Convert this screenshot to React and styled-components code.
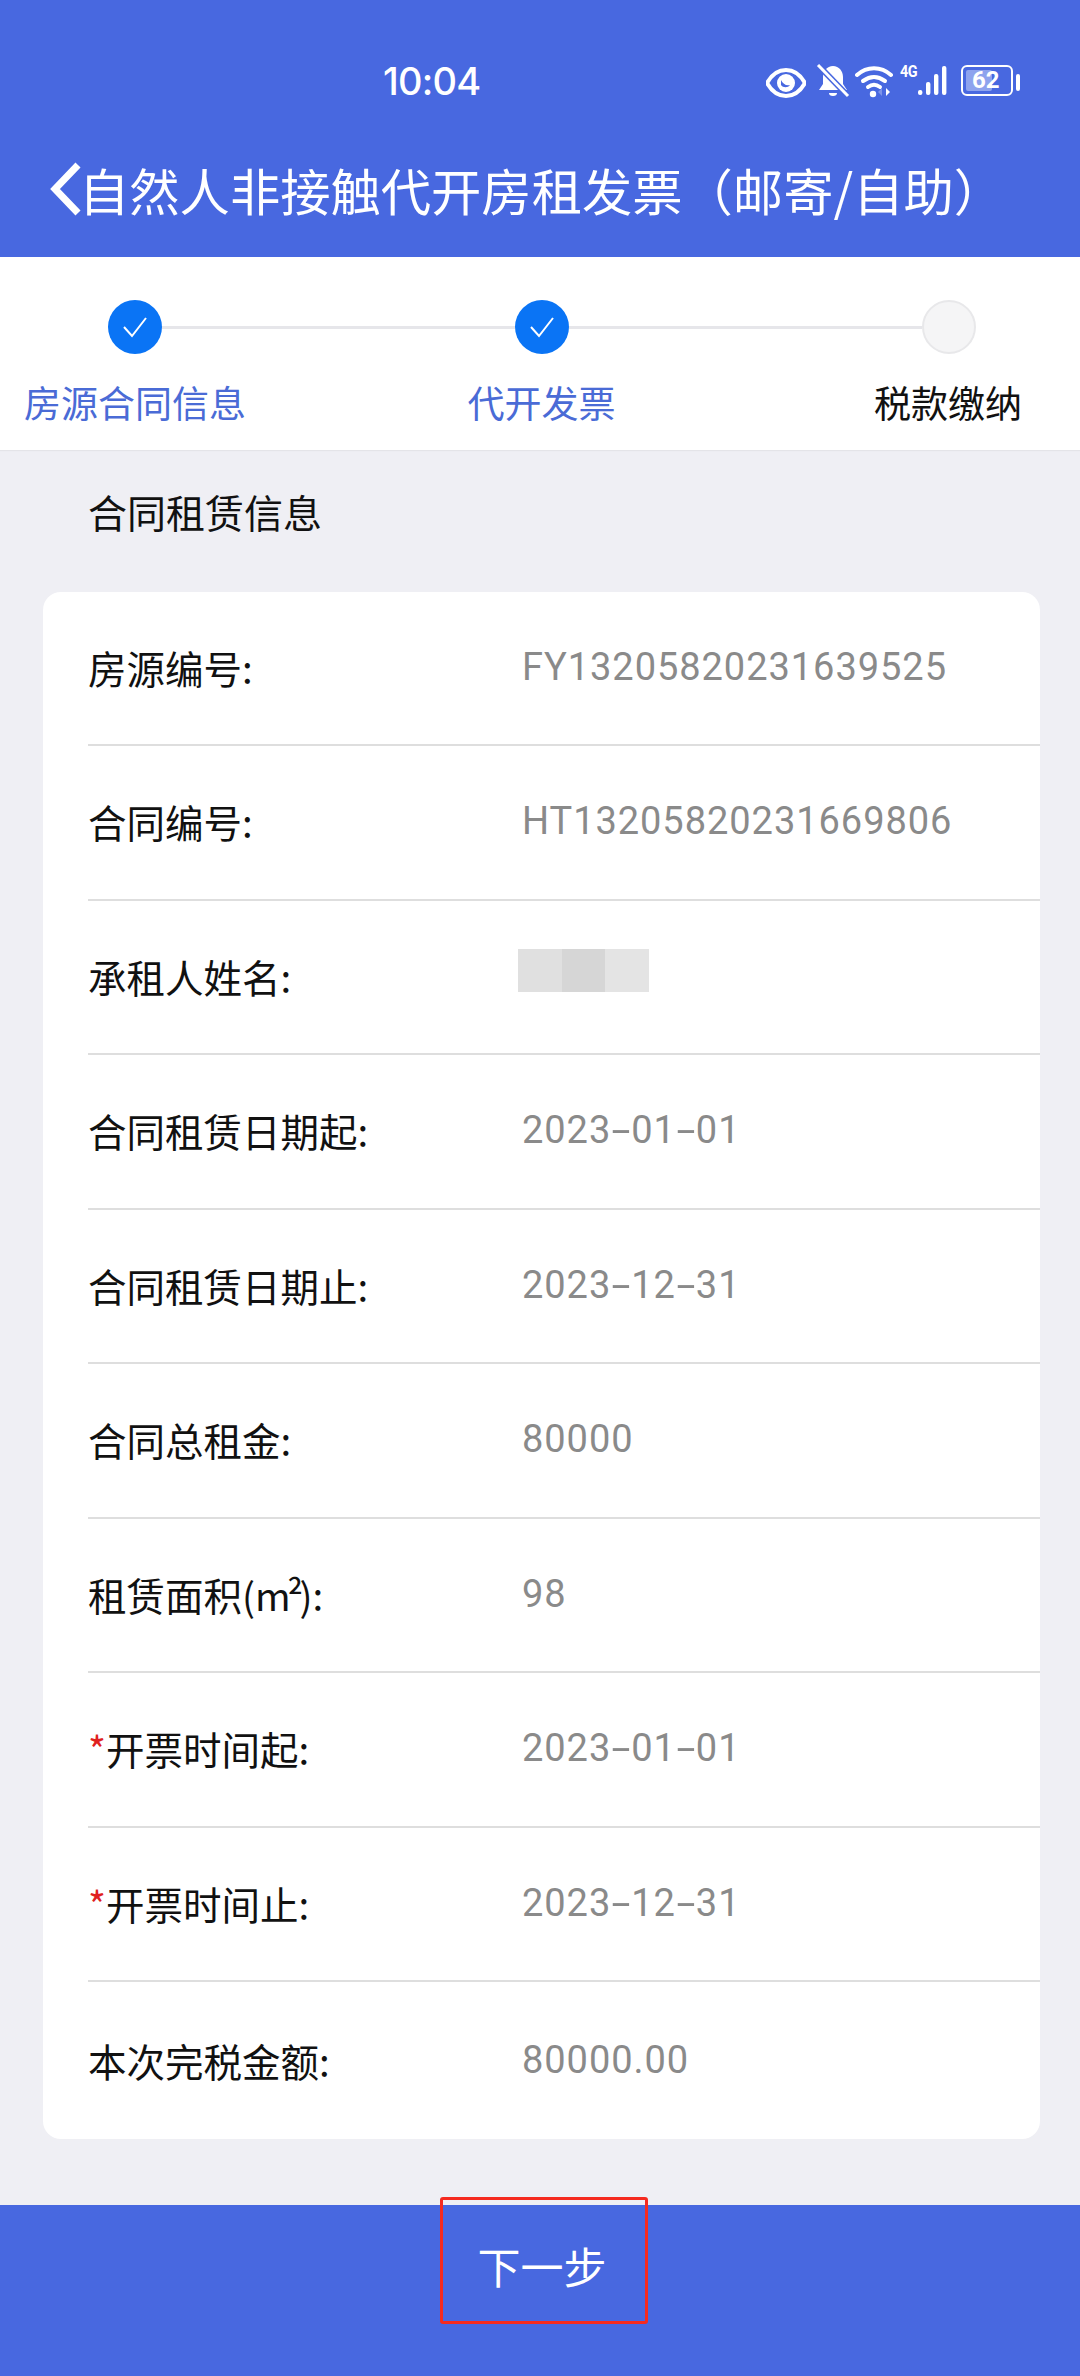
import React from "react";
import styled, { createGlobalStyle } from "styled-components";

const Global = createGlobalStyle`
  html, body { margin: 0; padding: 0; background: #efeff4; }
  * { box-sizing: border-box; }
  #root { width: 1080px; height: 2376px; }
`;

const FONT = `"Noto Sans CJK SC", "Noto Sans", sans-serif`;

const Page = styled.div`
  width: 1080px;
  height: 2376px;
  display: flex;
  flex-direction: column;
  overflow: hidden;
  font-family: ${FONT};
  background: #efeff4;
`;

const Header = styled.header`
  height: 257px;
  background: #4868e0;
  color: #fff;
  display: flex;
  flex-direction: column;
`;

const StatusBar = styled.div`
  height: 160px;
  padding-top: 62px;
  position: relative;
  display: flex;
  justify-content: flex-start;
`;

const Time = styled.div`
  margin-left: 383px;
  width: 100px;
  height: 36px;
  font-family: "Inter", "Noto Sans", sans-serif;
  font-size: 38px;
  line-height: 38px;
  font-weight: 500;
  letter-spacing: -0.8px;
`;

const StatusIcons = styled.div`
  margin-left: 283px;
  display: flex;
  align-items: flex-start;
`;

const NavBar = styled.div`
  display: flex;
  align-items: center;
  padding-left: 49px;
  height: 50px;
  margin-top: 4px;
`;

const Title = styled.h1`
  margin: 0 0 0 -2px;
  font-size: 50.3px;
  line-height: 50px;
  font-weight: 400;
  white-space: nowrap;
`;

const Stepper = styled.section`
  height: 193px;
  background: #fff;
  padding-top: 43px;
  box-shadow: 0 1px 1px #e4e4e8;
  position: relative;
`;

const Track = styled.div`
  display: flex;
  align-items: center;
  padding: 0 104px 0 108px;
`;

const Dot = styled.span`
  flex: none;
  width: 54px;
  height: 54px;
  border-radius: 50%;
  display: flex;
  align-items: center;
  justify-content: center;
  background: ${(p) => (p.$done ? "#0a74f5" : "#f5f5f6")};
  border: ${(p) => (p.$done ? "none" : "2px solid #e8e8ea")};
`;

const Line = styled.span`
  flex: 1;
  height: 3px;
  background: #e6e6ea;
`;

const StepLabels = styled.div`
  display: flex;
  justify-content: space-between;
  margin: 23px -3px 0 0;
`;

const StepLabel = styled.span`
  width: 270px;
  text-align: center;
  font-size: 37px;
  line-height: 50px;
  color: ${(p) => (p.$done ? "#4a6bd6" : "#111")};
`;

const SectionTitle = styled.h2`
  margin: 0;
  padding: 36px 0 0 88px;
  height: 142px;
  font-size: 39px;
  line-height: 50px;
  font-weight: 400;
  color: #111;
`;

const Card = styled.section`
  margin: 0 40px 0 43px;
  height: 1547px;
  background: #fff;
  border-radius: 18px;
  padding-left: 45px;
  overflow: hidden;
`;

const Row = styled.div`
  display: flex;
  align-items: center;
  height: ${(p) => (p.$first ? "154px" : p.$last ? "157px" : "154.5px")};
  border-bottom: ${(p) => (p.$last ? "none" : "2px solid #dedede")};
`;

const Label = styled.span`
  flex: none;
  width: 434px;
  margin-top: -2px;
  font-size: 38.5px;
  line-height: 50px;
  color: #111;
`;

const Star = styled.span`
  color: #e02020;
`;

const Unit = styled.span`
  letter-spacing: -3.5px;
`;

const Value = styled.span`
  font-family: "Roboto", "Noto Sans", sans-serif;
  font-size: 38px;
  line-height: 50px;
  color: #8a8a8a;
  letter-spacing: 0.95px;
  margin-top: -2px;
`;

const Dash = styled.span`
  display: inline-block;
  width: 20px;
  letter-spacing: 0;
  text-align: center;
  transform: scaleX(1.8);
`;

const Redacted = styled.span`
  display: flex;
  margin-top: -12px;
  margin-left: -4px;
`;

const Block = styled.span`
  width: 43.5px;
  height: 43px;
  background: ${(p) => p.$c};
`;

const Footer = styled.footer`
  margin-top: 66px;
  flex: 1;
  background: #4868e0;
  display: flex;
  justify-content: center;
  align-items: flex-start;
`;

const NextButton = styled.button`
  margin-top: -8px;
  margin-left: 7px;
  width: 208px;
  height: 127px;
  background: transparent;
  border: 3px solid #f52a1f;
  border-radius: 3px;
  color: #fff;
  font-family: ${FONT};
  font-size: 43px;
  line-height: 50px;
  padding: 8px 3px 0 0;
`;

const Eye = () => (
  <svg width="40" height="32" viewBox="0 0 40 32" style={{ marginTop: 5 }}>
    <path d="M1 16C6 7 13 3 20 3s14 4 19 13c-5 9-12 13-19 13S6 25 1 16Z" fill="none" stroke="#fff" strokeWidth="4" />
    <circle cx="20" cy="16" r="9" fill="#fff" />
    <path d="M15 13c2 4 5 6 9 5-2 3-7 3-9 0Z" fill="#4868e0" />
  </svg>
);

const Bell = () => (
  <svg width="34" height="34" viewBox="0 0 34 34" style={{ marginLeft: 10, marginTop: 2 }}>
    <path d="M17 2c6 0 10 5 10 11v7l4 6H3l4-6v-7C7 7 11 2 17 2Z" fill="#fff" />
    <path d="M13 29h8a4 3 0 0 1-8 0Z" fill="#fff" />
    <path d="M2 1 33 33" stroke="#4868e0" strokeWidth="6" />
    <path d="M2 1 32 32" stroke="#fff" strokeWidth="3" />
  </svg>
);

const Wifi = () => (
  <svg width="38" height="34" viewBox="0 0 38 34" style={{ marginLeft: 5, marginTop: 2 }}>
    <path d="M2 11C12 2 26 2 36 11" fill="none" stroke="#fff" strokeWidth="4" strokeLinecap="round" />
    <path d="M8 17c7-5 15-5 22 0" fill="none" stroke="#fff" strokeWidth="4" strokeLinecap="round" />
    <path d="M13 23c4-3 8-3 12 0" fill="none" stroke="#fff" strokeWidth="4" strokeLinecap="round" />
    <circle cx="18" cy="30" r="3.2" fill="#fff" />
    <path d="M27 24v8l-4-4Z" fill="#7d94ea" />
    <path d="M31 24v8l4-4Z" fill="#fff" />
  </svg>
);

const FourG = styled.span`
  width: 20px;
  margin-left: 7px;
  font-family: "Roboto", sans-serif;
  font-size: 17px;
  line-height: 18px;
  font-weight: 700;
  letter-spacing: -0.7px;
  transform: scaleX(0.85);
  transform-origin: left top;
`;

const Signal = () => (
  <svg width="32" height="32" viewBox="0 0 32 32" style={{ marginLeft: -3, marginTop: 3 }}>
    {[[1, 25, 5], [9, 17, 13], [17, 9, 21], [25, 1, 29]].map(([x, y, h]) => (
      <rect key={x} x={x} y={y} width="4.4" height={h} rx="2" fill="#fff" />
    ))}
  </svg>
);

const Battery = styled.span`
  position: relative;
  margin-left: 12px;
  margin-top: 3px;
  width: 52px;
  height: 31px;
  border: 2.5px solid #fff;
  border-radius: 6px;
  padding: 3px;
  display: flex;
`;

const BatteryFill = styled.span`
  width: 62%;
  background: #8ea3ee;
  border-radius: 2px;
`;

const BatteryText = styled.span`
  position: absolute;
  left: 9px;
  top: -1px;
  font-family: "Roboto", sans-serif;
  font-size: 24px;
  line-height: 28px;
  font-weight: 700;
`;

const BatteryNub = styled.span`
  margin: 12px 0 0 3px;
  width: 4px;
  height: 17px;
  background: #fff;
  border-radius: 2px;
`;

const Check = () => (
  <svg width="26" height="22" viewBox="0 0 26 22">
    <path d="M2 11l8 9L24 2" fill="none" stroke="#fff" strokeWidth="2" />
  </svg>
);

const rows = [
  ["房源编号:", "FY13205820231639525"],
  ["合同编号:", "HT13205820231669806"],
  ["承租人姓名:", null],
  ["合同租赁日期起:", "2023-01-01"],
  ["合同租赁日期止:", "2023-12-31"],
  ["合同总租金:", "80000"],
  [<React.Fragment key="area">租赁面积(<Unit>m²</Unit>):</React.Fragment>, "98"],
  ["开票时间起:", "2023-01-01", true],
  ["开票时间止:", "2023-12-31", true],
  ["本次完税金额:", "80000.00"],
];

const withDashes = (text) =>
  text.split("-").flatMap((part, i) => (i === 0 ? [part] : [<Dash key={i}>-</Dash>, part]));

export default function App() {
  return (
    <Page>
      <Global />
      <Header>
        <StatusBar>
          <Time>10:04</Time>
          <StatusIcons>
            <Eye />
            <Bell />
            <Wifi />
            <FourG>4G</FourG>
            <Signal />
            <Battery>
              <BatteryFill />
              <BatteryText>62</BatteryText>
            </Battery>
            <BatteryNub />
          </StatusIcons>
        </StatusBar>
        <NavBar>
          <svg width="32" height="54" viewBox="0 0 32 54">
            <path d="M29 3 6 27l23 24" fill="none" stroke="#fff" strokeWidth="7" />
          </svg>
          <Title>自然人非接触代开房租发票（邮寄/自助）</Title>
        </NavBar>
      </Header>
      <Stepper>
        <Track>
          <Dot $done><Check /></Dot>
          <Line />
          <Dot $done><Check /></Dot>
          <Line />
          <Dot />
        </Track>
        <StepLabels>
          <StepLabel $done>房源合同信息</StepLabel>
          <StepLabel $done>代开发票</StepLabel>
          <StepLabel>税款缴纳</StepLabel>
        </StepLabels>
      </Stepper>
      <SectionTitle>合同租赁信息</SectionTitle>
      <Card>
        {rows.map(([label, value, required], i) => (
          <Row key={i} $first={i === 0} $last={i === rows.length - 1}>
            <Label>
              {required && <Star>*</Star>}
              {label}
            </Label>
            {value ? (
              <Value>{withDashes(value)}</Value>
            ) : (
              <Redacted>
                <Block $c="#e0e0e0" />
                <Block $c="#d6d6d6" />
                <Block $c="#e4e4e4" />
              </Redacted>
            )}
          </Row>
        ))}
      </Card>
      <Footer>
        <NextButton>下一步</NextButton>
      </Footer>
    </Page>
  );
}
